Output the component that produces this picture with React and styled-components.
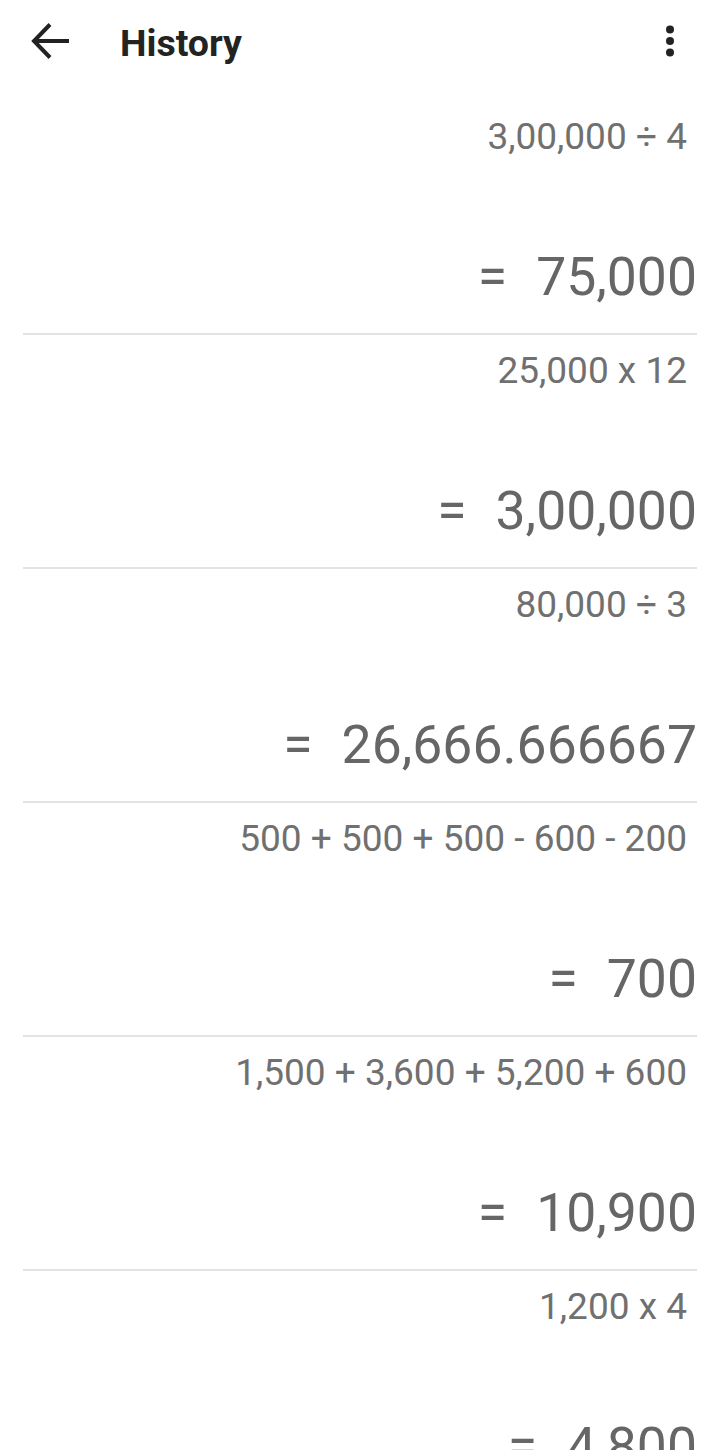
import React from "react"
import styled, { createGlobalStyle } from "styled-components"

const GlobalStyle = createGlobalStyle`
  html, body {
    margin: 0;
    padding: 0;
    background: #ffffff;
    font-family: Roboto, "Noto Sans", "Liberation Sans", sans-serif;
  }
`

const Page = styled.div`
  width: 720px;
  background: #ffffff;
`

const Toolbar = styled.header`
  height: 101px;
  display: flex;
  align-items: flex-start;
  padding: 0 44px 0 30px;
  box-sizing: border-box;
`

const IconButton = styled.button`
  border: none;
  background: none;
  padding: 0;
  margin: 0;
  height: 82px;
  display: flex;
  align-items: center;
  justify-content: center;
  color: #222222;
  cursor: pointer;
`

const Title = styled.h1`
  flex: 1;
  margin: 0 0 0 50px;
  height: 86px;
  line-height: 86px;
  font-size: 37.5px;
  font-weight: 700;
  color: #232323;
  letter-spacing: 0;
`

const List = styled.ul`
  list-style: none;
  margin: 0;
  padding: 0 23px;
`

const Entry = styled.li`
  height: 234px;
  box-sizing: border-box;
  padding-top: 12px;
  border-bottom: 2px solid #e3e3e3;
  display: flex;
  flex-direction: column;
  align-items: flex-end;
`

const Expression = styled.div`
  height: 48px;
  line-height: 48px;
  padding-right: 10px;
  font-size: 37px;
  color: #707070;
  white-space: nowrap;
`

const Result = styled.div`
  margin-top: 86px;
  height: 60px;
  line-height: 60px;
  font-size: 53.5px;
  color: #666666;
  white-space: nowrap;
`

const Equals = styled.span`
  margin-right: 29px;
`

const history = [
  { expr: "3,00,000 ÷ 4", result: "75,000" },
  { expr: "25,000 x 12", result: "3,00,000" },
  { expr: "80,000 ÷ 3", result: "26,666.666667" },
  { expr: "500 + 500 + 500 - 600 - 200", result: "700" },
  { expr: "1,500 + 3,600 + 5,200 + 600", result: "10,900" },
  { expr: "1,200 x 4", result: "4,800" },
]

const BackArrow = () => (
  <svg width="40" height="40" viewBox="0 0 40 40" fill="none">
    <path
      d="M39 20H5M20 3.5L4 20l16 16.5"
      stroke="currentColor"
      strokeWidth="4"
    />
  </svg>
)

const MoreDots = () => (
  <svg width="12" height="32" viewBox="0 0 12 32">
    <circle cx="6" cy="4.5" r="4" fill="currentColor" />
    <circle cx="6" cy="16" r="4" fill="currentColor" />
    <circle cx="6" cy="27.5" r="4" fill="currentColor" />
  </svg>
)

export default function App() {
  return (
    <Page>
      <GlobalStyle />
      <Toolbar>
        <IconButton aria-label="Back">
          <BackArrow />
        </IconButton>
        <Title>History</Title>
        <IconButton aria-label="More options">
          <MoreDots />
        </IconButton>
      </Toolbar>
      <List>
        {history.map((item, i) => (
          <Entry key={i}>
            <Expression>{item.expr}</Expression>
            <Result>
              <Equals>=</Equals>
              {item.result}
            </Result>
          </Entry>
        ))}
      </List>
    </Page>
  )
}
